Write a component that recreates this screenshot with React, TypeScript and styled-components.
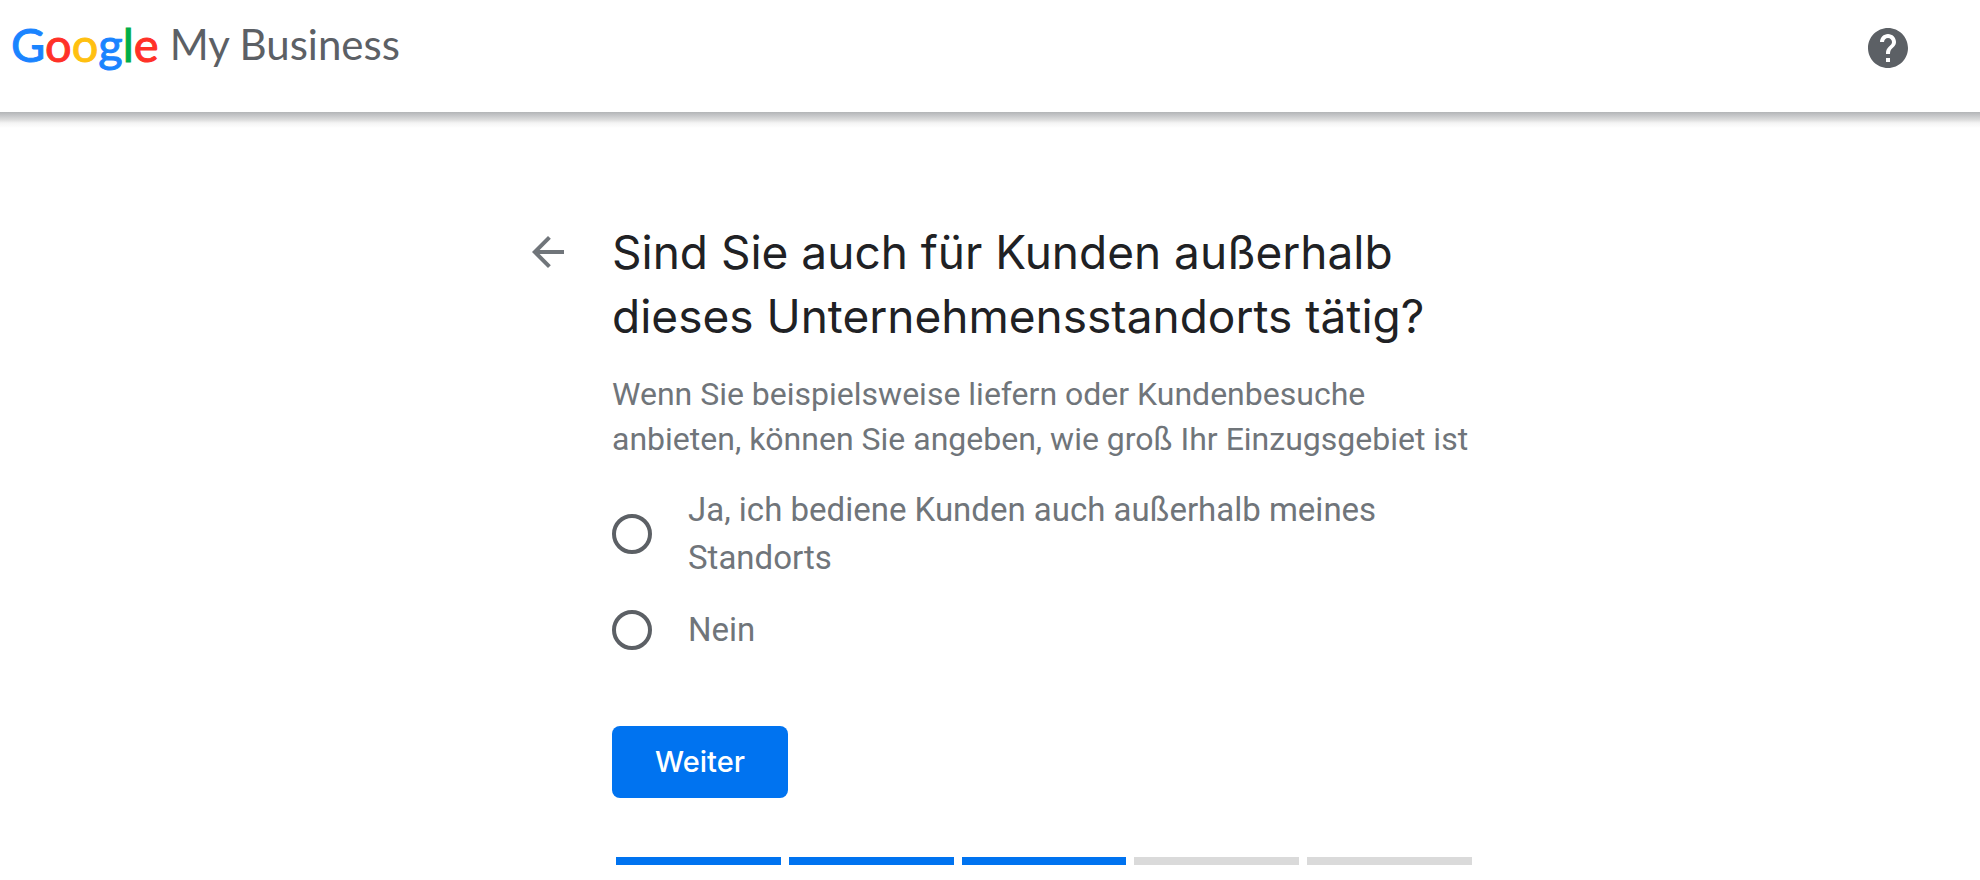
import React from 'react';
import styled, { createGlobalStyle } from 'styled-components';

const GlobalStyle = createGlobalStyle`
  * { box-sizing: border-box; }
  body { margin: 0; background: #fff; color: #202124; font-family: Roboto, sans-serif; }
`;

const Header = styled.header`
  display: flex;
  align-items: flex-start;
  justify-content: space-between;
  height: 112px;
  padding: 16px 68px 0 11px;
  background: #fff;
`;

const HeaderShadow = styled.div`
  height: 16px;
  background: linear-gradient(#b3b5b7, #c8c9cb 4px, #dedede 8px, #f4f4f4 11px, #fff);
`;

const Brand = styled.a`
  display: flex;
  align-items: center;
  gap: 11px;
  font-family: Lato, sans-serif;
  line-height: 56px;
  text-decoration: none;
`;

const Wordmark = styled.span`
  font-size: 47px;
`;

const Letter = styled.span<{ $color: string }>`
  color: ${(p) => p.$color};
  -webkit-text-stroke: 1px ${(p) => p.$color};
`;

const Product = styled.span`
  color: #5c6065;
  font-size: 42px;
`;

const IconButton = styled.button<{ $color: string }>`
  width: 48px;
  height: 48px;
  flex: none;
  padding: 0;
  border: 0;
  background: none;
  color: ${(p) => p.$color};
  cursor: pointer;

  svg { display: block; width: 100%; height: 100%; fill: currentColor; }
`;

const HelpSlot = styled.div`
  padding-top: 8px;
`;

const Main = styled.main`
  display: flex;
  align-items: flex-start;
  gap: 40px;
  max-width: 972px;
  margin: 0 auto;
  padding: 92px 0 0 20px;
`;

const BackSlot = styled.div`
  padding-top: 8px;
`;

const Form = styled.form`
  flex: 1;
  min-width: 0;
`;

const Title = styled.h1`
  margin: 0 0 24px;
  font: 400 46px/64px Inter, sans-serif;
`;

const Description = styled.p`
  margin: 0 0 24px;
  color: #70757a;
  font-size: 32px;
  line-height: 45px;
`;

const Options = styled.div`
  display: flex;
  flex-direction: column;
  gap: 24px;
  margin-bottom: 72px;
`;

const Option = styled.label`
  display: flex;
  align-items: center;
  gap: 36px;
  padding-right: 48px;
  color: #70757a;
  font-size: 33px;
  line-height: 48px;
  cursor: pointer;
`;

const Radio = styled.input`
  appearance: none;
  flex: none;
  width: 40px;
  height: 40px;
  margin: 0;
  border: 4px solid #5c6065;
  border-radius: 50%;

  &:checked { border-color: #0073f0; background: radial-gradient(#0073f0 10px, transparent 11px); }
`;

const Submit = styled.button`
  display: block;
  width: 176px;
  height: 72px;
  margin-bottom: 59px;
  padding: 0;
  border: 0;
  border-radius: 8px;
  background: #0073f0;
  color: #fff;
  font: 500 29px/40px Inter, sans-serif;
  cursor: pointer;
`;

const Progress = styled.div`
  display: flex;
  gap: 8px;
  padding: 0 4px;
`;

const Step = styled.div<{ $done: boolean }>`
  flex: 1;
  height: 8px;
  background: ${(p) => (p.$done ? '#0073f0' : '#dadada')};
`;

const wordmark = [
  ['G', '#1a84ff'],
  ['o', '#ff3128'],
  ['o', '#ffc010'],
  ['g', '#1a84ff'],
  ['l', '#00ae48'],
  ['e', '#ff3128'],
];

const steps = [true, true, true, false, false];

export default function App() {
  return (
    <>
      <GlobalStyle />
      <Header>
        <Brand href="#">
          <Wordmark>
            {wordmark.map(([char, color], i) => (
              <Letter key={i} $color={color}>{char}</Letter>
            ))}
          </Wordmark>
          <Product>My Business</Product>
        </Brand>
        <HelpSlot>
          <IconButton $color="#5c6065" type="button" aria-label="Hilfe">
            <svg viewBox="0 0 24 24">
              <path d="M12 2C6.48 2 2 6.48 2 12s4.480 10 10 10 10-4.480 10-10S17.520 2 12 2zm1 17h-2v-2h2v2zm2.070-7.750-.9.920C13.450 12.900 13 13.500 13 15h-2v-.5c0-1.100.450-2.100 1.170-2.830l1.240-1.260c.370-.360.590-.860.590-1.410 0-1.100-.9-2-2-2s-2 .9-2 2H8c0-2.210 1.790-4 4-4s4 1.790 4 4c0 .880-.360 1.680-.930 2.250z" />
            </svg>
          </IconButton>
        </HelpSlot>
      </Header>
      <HeaderShadow />
      <Main>
        <BackSlot>
          <IconButton $color="#70757a" type="button" aria-label="Zurück">
            <svg viewBox="0 0 24 24">
              <path d="M20 11H7.830l5.590-5.590L12 4l-8 8 8 8 1.410-1.410L7.830 13H20v-2z" />
            </svg>
          </IconButton>
        </BackSlot>
        <Form onSubmit={(e) => e.preventDefault()}>
          <Title>Sind Sie auch für Kunden außerhalb dieses Unternehmensstandorts tätig?</Title>
          <Description>
            Wenn Sie beispielsweise liefern oder Kundenbesuche anbieten, können Sie angeben, wie groß Ihr Einzugsgebiet ist
          </Description>
          <Options role="radiogroup">
            <Option>
              <Radio type="radio" name="area" value="yes" />
              <span>Ja, ich bediene Kunden auch außerhalb meines Standorts</span>
            </Option>
            <Option>
              <Radio type="radio" name="area" value="no" />
              <span>Nein</span>
            </Option>
          </Options>
          <Submit type="submit">Weiter</Submit>
          <Progress>
            {steps.map((done, i) => (
              <Step key={i} $done={done} />
            ))}
          </Progress>
        </Form>
      </Main>
    </>
  );
}
